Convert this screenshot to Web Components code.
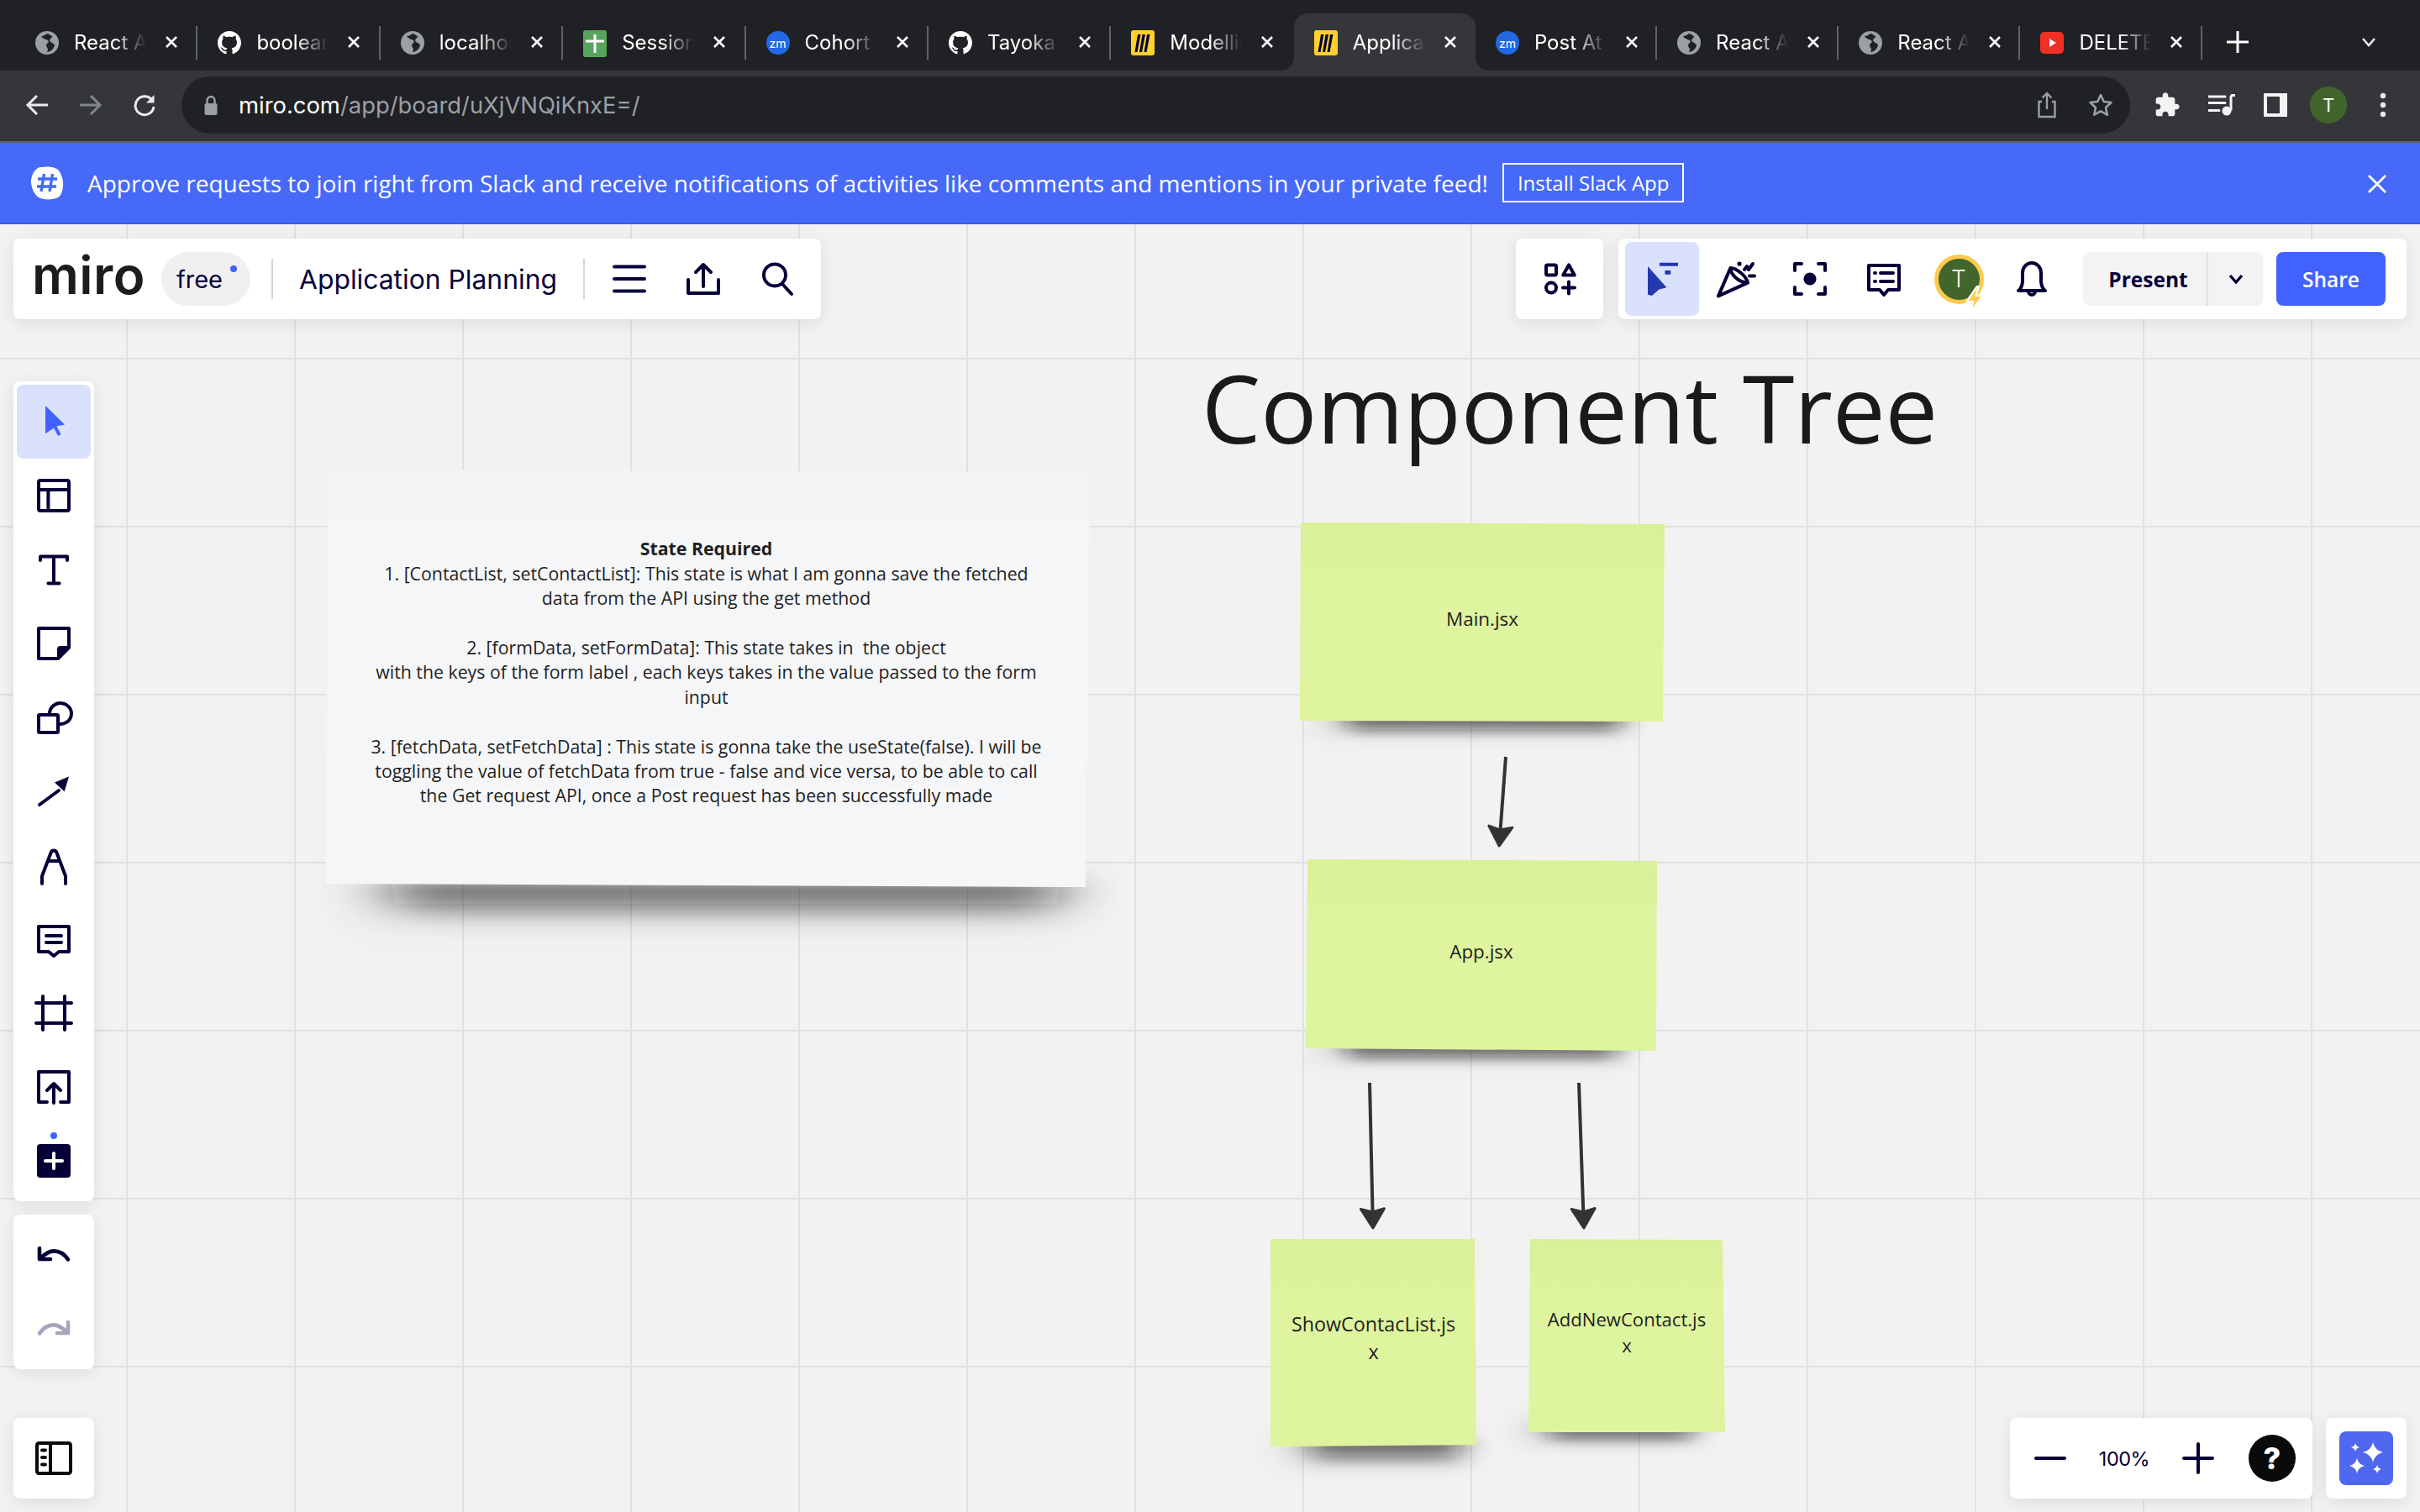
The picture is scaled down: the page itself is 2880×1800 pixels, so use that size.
<!DOCTYPE html>
<html lang="en">
<head>
<meta charset="utf-8">
<title>Application Planning</title>
<style>
  html, body { margin: 0; height: 100%; }
  body { width: 2880px; height: 1800px; overflow: hidden; display: flex; flex-direction: column; background: #f2f2f2; font-family: "Open Sans", sans-serif; }
  board-canvas { flex: 1; }
</style>
</head>
<body>
<chrome-tabs>
  <chrome-tab icon="globe">React App</chrome-tab>
  <chrome-tab icon="github">boolean</chrome-tab>
  <chrome-tab icon="globe">localhost</chrome-tab>
  <chrome-tab icon="sheets">Session</chrome-tab>
  <chrome-tab icon="zoom">Cohort</chrome-tab>
  <chrome-tab icon="github">Tayoka</chrome-tab>
  <chrome-tab icon="miro">Modelling</chrome-tab>
  <chrome-tab icon="miro" active>Application</chrome-tab>
  <chrome-tab icon="zoom">Post At</chrome-tab>
  <chrome-tab icon="globe">React App</chrome-tab>
  <chrome-tab icon="globe">React App</chrome-tab>
  <chrome-tab icon="youtube">DELETE</chrome-tab>
</chrome-tabs>
<chrome-toolbar></chrome-toolbar>
<slack-banner></slack-banner>
<board-canvas>
  <board-title>Component Tree</board-title>

  <board-note points="390,559 1297,563 1292,1056 388,1052" color="#f5f6f8" top="#f3f4f6" shadow="440 1275 30 12" size="21.3" shift="-4" lift="15">
    <div style="width:840px"><b>State Required</b><br>1. [ContactList, setContactList]: This state is what I am gonna save the fetched<br>data from the API using the get method<br><br>2. [formData, setFormData]: This state takes in &nbsp;the object<br>with the keys of the form label , each keys takes in the value passed to the form<br>input<br><br>3. [fetchData, setFetchData] : This state is gonna take the useState(false). I will be<br>toggling the value of fetchData from true - false and vice versa, to be able to call<br>the Get request API, once a Post request has been successfully made</div>
  </board-note>
  <board-note points="1548,622 1981,624 1979,859 1547,858" shadow="1590 1935 14 5" size="22.4" lift="8">Main.jsx</board-note>
  <board-note points="1556,1023 1972,1025 1971,1251 1554,1248" shadow="1590 1930 12 5" size="22.4" lift="8">App.jsx</board-note>
  <board-note points="1512,1475 1755,1475 1757,1720 1512,1722" shadow="1545 1745 18 6" size="23.3" lift="11">ShowContacList.js<br>x</board-note>
  <board-note points="1821,1475 2050,1476 2053,1705 1819,1705" shadow="1830 2020 12 5" size="22.1" lift="8">AddNewContact.js<br>x</board-note>

  <board-arrow from="1792,901" to="1784,1009"></board-arrow>
  <board-arrow from="1630,1289" to="1634,1464"></board-arrow>
  <board-arrow from="1879,1289" to="1885,1464"></board-arrow>

  <ui-panel style="position:absolute;left:16px;top:17px;height:96px;width:961px">
    <top-brand></top-brand>
  </ui-panel>
  <ui-panel style="position:absolute;left:1804px;top:17px;height:96px;width:104px;justify-content:center">
    <tool-btn icon="apps"></tool-btn>
  </ui-panel>
  <ui-panel style="position:absolute;left:1926px;top:17px;height:96px;width:938px;padding:4px 24px 4px 8px;box-sizing:border-box">
    <tool-btn icon="cursorList" active color="#2438b0"></tool-btn>
    <tool-btn icon="confetti"></tool-btn>
    <tool-btn icon="focus"></tool-btn>
    <tool-btn icon="commentList"></tool-btn>
    <user-avatar></user-avatar>
    <tool-btn icon="bell"></tool-btn>
    <present-share></present-share>
  </ui-panel>

  <ui-panel vertical style="position:absolute;left:16px;top:187px;width:96px;padding:4px;box-sizing:border-box">
    <tool-btn icon="pointer" active color="#4262ff"></tool-btn>
    <tool-btn icon="template"></tool-btn>
    <tool-btn icon="text"></tool-btn>
    <tool-btn icon="sticky"></tool-btn>
    <tool-btn icon="shapes"></tool-btn>
    <tool-btn icon="arrow"></tool-btn>
    <tool-btn icon="pen"></tool-btn>
    <tool-btn icon="comment"></tool-btn>
    <tool-btn icon="frame"></tool-btn>
    <tool-btn icon="upload"></tool-btn>
    <tool-btn icon="more"></tool-btn>
  </ui-panel>
  <ui-panel vertical style="position:absolute;left:16px;top:1179px;width:96px;padding:4px;box-sizing:border-box">
    <tool-btn icon="undo"></tool-btn>
    <tool-btn icon="redo" color="#a5a6bd"></tool-btn>
  </ui-panel>
  <ui-panel style="position:absolute;left:16px;top:1421px;width:96px;padding:4px;box-sizing:border-box">
    <tool-btn icon="sidebar" color="#0a0a0a"></tool-btn>
  </ui-panel>

  <ui-panel style="position:absolute;left:2392px;top:1421px;width:360px;padding:4px;box-sizing:border-box">
    <tool-btn icon="minus"></tool-btn>
    <zoom-label>100%</zoom-label>
    <tool-btn icon="plus"></tool-btn>
    <help-button></help-button>
  </ui-panel>
  <ui-panel style="position:absolute;left:2768px;top:1421px;width:96px;height:96px;justify-content:center">
    <ai-button></ai-button>
  </ui-panel>
</board-canvas>

<script>
// svg bodies, everything on a 24 unit grid unless the tag says otherwise
const ICONS = {
  apps: '<rect x="4" y="3.7" width="6" height="6" rx=".8"/><path d="M17.5 3.7l3.4 6h-6.8z"/><circle cx="7" cy="17.3" r="3"/><path d="M17.5 13.8v7M14 17.3h7"/>',
  cursorList: '<path fill="currentColor" stroke="none" d="M3.5 4.5l11.2 12.6-4.5 1.200L6 22l-2.500-.6z"/><path fill="currentColor" stroke="none" d="M10.500 2.400h11v2h-11zM13.700 7h3.400v2.400h-3.400z"/>',
  confetti: '<path d="M1.500 22.200L8.700 5.500c3.300 0 9.300 4.500 10.300 8.800zM8.700 5.500c0 3.500 4.300 8.500 10.300 8.800"/><circle cx="14" cy="3" r="1.300" fill="currentColor" stroke="none"/><path d="M17 6.500l1.500-2 1 2 2.500-3.500M20 10.200h3"/>',
  focus: '<path d="M7 3H3v4M17 3h4v4M21 17v4h-4M7 21H3v-4"/><circle cx="12" cy="12" r="3.800" fill="currentColor" stroke="none"/>',
  commentList: '<path d="M3 4h18v14.500h-6.500L12 21.500l-2.500-3H3z"/><path d="M6.500 8.500h.5M10 8.500h7.500M6.500 13.500h.5M10 13.500h7.500"/>',
  bell: '<path d="M4 19c2-1.500 2.500-3 2.500-6V8.500c0-3.500 2.500-6 5.500-6s5.500 2.500 5.500 6V13c0 3 .5 4.500 2.500 6z"/><path d="M10 19.500a2 2 0 004 0"/>',
  menu: '<path d="M3 4.700h18M3 12h18M3 19.300h18"/>',
  exportUp: '<path d="M3 12.500V20.500h18v-8M12 16.500V3.500M7.500 8L12 3.500 16.500 8"/>',
  search: '<circle cx="10.500" cy="9.700" r="6.500"/><path d="M15 15l5.500 6"/>',
  pointer: '<path fill="currentColor" stroke="none" d="M7 2.500l11.500 11.200-5 1.100-6.500 4.300z"/><path d="M12.500 14.500l2.500 4.800"/>',
  template: '<rect x="3" y="3" width="18" height="18" rx="1"/><path d="M3 8.500h18M8.700 8.500V21"/>',
  text: '<path d="M4 6.500V4.200h16v2.300M12 4.200V20M8.700 20.200h6.600"/>',
  sticky: '<path d="M3 3h18v11.500L14.500 21H3z" stroke-linejoin="round"/><path fill="currentColor" stroke="none" d="M14 21v-5.500a2 2 0 012-2h5.500v1.500l-6 5.500z"/>',
  shapes: '<rect x="3" y="10.500" width="11.500" height="10.500" rx=".6"/><path d="M9.500 9.500A6.500 6.200 0 1 1 14.500 15.800"/>',
  arrow: '<path d="M3.500 20L15 11.500"/><path fill="currentColor" stroke="none" d="M21 3.200l-8.500 3.500 5.800 5.400z"/>',
  pen: '<path d="M5 23v-4.500l5.300-14a1.800 1.800 0 013.400 0l5.300 14V23M8.500 9.500h7"/>',
  comment: '<path d="M3 4.500h18v15h-6l-3 2.500-3-2.500H3z"/><path d="M7.500 10h9M7.500 14h9"/>',
  frame: '<path d="M5.500 2v20M18.500 2v20M1.500 6h21M1.500 18h21"/>',
  upload: '<path d="M8 21H3V3h18v18h-5M12 21.500V10M8 14l4-4 4 4"/>',
  more: '<rect x="2" y="2" width="20" height="20" rx="2" fill="currentColor" stroke="none"/><path d="M7 12h10M12 7.500v9" stroke="#fff"/>',
  undo: '<path d="M3.500 8v6.500H10" stroke-width="2.300"/><path d="M3.800 14.300C7 11 9.500 9.700 12 9.700c3.500 0 6.500 2 8.500 5" stroke-width="2.300"/>',
  redo: '<path d="M20.500 8v6.500H14" stroke-width="2.300"/><path d="M20.200 14.300C17 11 14.500 9.700 12 9.700c-3.500 0-6.500 2-8.500 5" stroke-width="2.300"/>',
  sidebar: '<rect x="2" y="3" width="20" height="18" rx="1.200"/><path d="M10 3v18M5 7.200h2M5 11.500h2M5 15.800h2"/>',
  minus: '<path d="M3.500 12h17"/>',
  plus: '<path d="M3.500 12h17M12 3.500v17"/>'
};

const FAVICONS = {
  globe: '<svg viewBox="0 0 28 28"><circle cx="14" cy="14" r="14" fill="#9aa0a6"/><path fill="#202124" d="M14 3c-2 1.500-4 3-7 3 1 2.500 4 3.500 7 4.500 2.500 1 2 3 .5 4-2 1-1.500 3.500-.5 5 1.500 1.500 1 3.500 0 5.500 4-.5 8-3.500 9-8-1-3-4-3-5.500-5-1-1.500 1-4 3-5-2-2-4-3.500-6.500-4z"/></svg>',
  github: '<svg viewBox="0 0 16 16"><path fill="#fff" d="M8 0C3.580 0 0 3.580 0 8c0 3.540 2.290 6.530 5.470 7.590.4.070.55-.17.55-.38 0-.19-.01-.82-.01-1.490-2.010.37-2.530-.49-2.690-.94-.09-.23-.48-.94-.82-1.130-.28-.15-.68-.52-.01-.53.63-.01 1.080.58 1.230.82.72 1.210 1.870.87 2.330.66.070-.52.28-.87.51-1.070-1.780-.2-3.640-.89-3.640-3.950 0-.87.31-1.590.82-2.150-.08-.2-.36-1.020.08-2.120 0 0 .67-.21 2.200.82.64-.18 1.320-.27 2-.27.68 0 1.360.09 2 .27 1.530-1.040 2.200-.82 2.200-.82.44 1.100.16 1.920.08 2.120.51.56.82 1.270.82 2.150 0 3.070-1.870 3.750-3.650 3.950.29.25.54.73.54 1.480 0 1.070-.01 1.930-.01 2.200 0 .21.15.46.55.38A8.013 8.013 0 0016 8c0-4.420-3.580-8-8-8z"/></svg>',
  sheets: '<svg viewBox="0 0 28 28"><rect width="28" height="32" y="-1" rx="3" fill="#57a55c"/><path d="M14 4v22M3 12h22" stroke="#fff" stroke-width="3"/></svg>',
  miro: '<svg viewBox="0 0 28 28"><rect y="-1" width="28" height="30" rx="3" fill="#ffd02f"/><path fill="#050038" d="M11.500 4h3.500L11 25H8zM17 4h3.500L16.500 25h-3zM6 4h3.500L5.500 25h-3z" transform="translate(2)"/></svg>',
  youtube: '<svg viewBox="0 0 28 28"><rect y="1" width="28" height="26" rx="5" fill="#ee3124"/><path fill="#fff" d="M11 9l8 5-8 5z"/></svg>'
};

class ChromeTabs extends HTMLElement {
  constructor() {
    super();
    this.attachShadow({ mode: 'open' });
  }

  connectedCallback() {
    this.shadowRoot.innerHTML = `
      <style>
        :host { display: flex; height: 84px; box-sizing: border-box; padding: 16px 0 0 18px; background: #202124; position: relative; }
        .plus { position: absolute; left: 2650px; top: 37px; width: 26px; height: 26px; }
        .more { position: absolute; left: 2810px; top: 44px; width: 18px; height: 12px; }
      </style>
      <slot></slot>
      <svg class="plus" viewBox="0 0 26 26"><path d="M13 0v26M0 13h26" stroke="#fff" stroke-width="3"/></svg>
      <svg class="more" viewBox="0 0 18 12"><path d="M2 2l7 8 7-8" fill="none" stroke="#e8eaed" stroke-width="2.500"/></svg>
    `;
  }
}

class ChromeTab extends HTMLElement {
  constructor() {
    super();
    this.attachShadow({ mode: 'open' });
  }

  connectedCallback() {
    const name = this.getAttribute('icon');
    let fav = FAVICONS[name] || '';
    if (name === 'zoom') {
      fav = '<span class="zm">zm</span>';
    }
    // tabs after the active one sit a little closer together
    const index = [...this.parentNode.children].indexOf(this);
    this.style.width = (index < 7 ? 217.4 : 216.2) + 'px';
    this.shadowRoot.innerHTML = `
      <style>
        :host { display: flex; align-items: center; height: 68px; flex: none; box-sizing: border-box; padding-left: 24px; position: relative; color: #fff; font: 24px Inter, sans-serif; }
        :host([active]) { background: #35363a; border-radius: 16px 16px 0 0; }
        :host([active])::before, :host([active])::after { content: ''; position: absolute; bottom: 0; width: 16px; height: 16px; }
        :host([active])::before { left: -16px; background: radial-gradient(circle at 0 0, transparent 16px, #35363a 16.500px); }
        :host([active])::after { right: -16px; background: radial-gradient(circle at 100% 0, transparent 16px, #35363a 16.500px); }
        .fav { width: 28px; height: 28px; flex: none; display: block; margin-top: 2px; }
        .fav svg { display: block; width: 28px; height: 28px; overflow: visible; }
        .zm { display: flex; align-items: center; justify-content: center; width: 28px; height: 28px; border-radius: 50%; background: #2368e4; font: 14px Inter, sans-serif; color: #fff; }
        .title { width: 86px; margin-left: 18px; white-space: nowrap; overflow: hidden; -webkit-mask-image: linear-gradient(90deg, #000 55%, transparent 100%); mask-image: linear-gradient(90deg, #000 55%, transparent 100%); }
        .close { position: absolute; left: 178px; top: 26px; width: 16px; height: 16px; }
        .sep { position: absolute; right: 0; top: 15px; width: 2px; height: 40px; background: #5f6368; }
        :host([active]) .sep { display: none; }
      </style>
      <span class="fav">${fav}</span>
      <span class="title"><slot></slot></span>
      <svg class="close" viewBox="0 0 16 16"><path d="M2 2l12 12M14 2L2 14" stroke="#fff" stroke-width="2.600"/></svg>
      <span class="sep"></span>
    `;
    // the separator just before the active tab goes away too
    const next = this.nextElementSibling;
    if (next && next.hasAttribute('active')) {
      this.shadowRoot.querySelector('.sep').style.display = 'none';
    }
  }
}

class ChromeToolbar extends HTMLElement {
  constructor() {
    super();
    this.attachShadow({ mode: 'open' });
  }

  connectedCallback() {
    this.shadowRoot.innerHTML = `
      <style>
        :host { display: flex; align-items: center; height: 86px; box-sizing: border-box; padding: 0 0 2px 0; background: #35363a; border-bottom: 2px solid #5f6368; position: relative; }
        .nav { width: 64px; display: flex; justify-content: center; flex: none; }
        .nav svg { width: 28px; height: 28px; }
        .start { width: 12px; flex: none; }
        .omni { margin-left: 12px; width: 2319px; height: 68px; flex: none; box-sizing: border-box; border-radius: 34px; background: #202124; display: flex; align-items: center; padding-left: 26px; font: 27.400px Inter, sans-serif; color: #9aa0a6; position: relative; }
        .omni b { font-weight: 400; color: #fff; }
        .lock { width: 18px; height: 24px; margin-right: 24px; }
        .r { position: absolute; top: 41px; transform: translate(-50%, -50%); display: block; }
        .avatar { position: absolute; left: 2749px; top: 19px; width: 44px; height: 44px; border-radius: 50%; background: #41652a; color: #fff; font: 22px Inter, sans-serif; display: flex; align-items: center; justify-content: center; }
      </style>
      <span class="start"></span>
      <span class="nav"><svg viewBox="0 0 28 28"><path d="M27 14H3M14 3L3 14l11 11" fill="none" stroke="#e8eaed" stroke-width="3"/></svg></span>
      <span class="nav"><svg viewBox="0 0 28 28"><path d="M1 14h24M14 3l11 11-11 11" fill="none" stroke="#80868b" stroke-width="3"/></svg></span>
      <span class="nav"><svg viewBox="0 0 28 28"><path d="M23.500 9A11 11 0 1 0 25 16" fill="none" stroke="#e8eaed" stroke-width="3"/><path d="M25.500 2v9.500H16z" fill="#e8eaed"/></svg></span>
      <div class="omni">
        <svg class="lock" viewBox="0 0 18 24"><path d="M4.500 11V6.500a4.500 4.500 0 019 0V11" fill="none" stroke="#9aa0a6" stroke-width="2.400"/><rect x="1.500" y="10" width="15" height="14" rx="2" fill="#9aa0a6"/></svg>
        <span><b>miro.com</b>/app/board/uXjVNQiKnxE=/</span>
      </div>
      <svg class="r" style="left:2436px;width:26px;height:32px" viewBox="0 0 26 32"><path d="M7 12H3.500v18h19V12H19M13 21V2M7.500 7.500L13 2l5.500 5.500" fill="none" stroke="#9aa0a6" stroke-width="2.400"/></svg>
      <svg class="r" style="left:2500px;width:30px;height:30px" viewBox="0 0 30 30"><path d="M15 3l3.700 8 8.800 1-6.500 6 1.800 8.700L15 22.300l-7.800 4.400L9 18l-6.500-6 8.800-1z" fill="none" stroke="#9aa0a6" stroke-width="2.600" stroke-linejoin="round"/></svg>
      <svg class="r" style="left:2579px;width:32px;height:32px" viewBox="0 0 24 24"><path fill="#f1f3f4" d="M20.500 11H19V7c0-1.100-.9-2-2-2h-4V3.500C13 2.120 11.880 1 10.500 1S8 2.120 8 3.500V5H4c-1.100 0-1.990.9-1.990 2v3.800H3.500c1.490 0 2.700 1.210 2.700 2.700s-1.210 2.700-2.700 2.700H2V20c0 1.100.9 2 2 2h3.800v-1.500c0-1.490 1.210-2.700 2.700-2.700 1.490 0 2.700 1.210 2.700 2.700V22H17c1.100 0 2-.9 2-2v-4h1.500c1.380 0 2.500-1.120 2.500-2.500S21.880 11 20.500 11z"/></svg>
      <svg class="r" style="left:2644px;width:32px;height:28px" viewBox="0 0 32 28"><path d="M0 4h20M0 11.500h20M0 20.500h13" stroke="#f1f3f4" stroke-width="3" stroke-linecap="round"/><path d="M27 2.500v18" stroke="#f1f3f4" stroke-width="3"/><path d="M27 1h5v3h-5z" fill="#f1f3f4"/><circle cx="22" cy="21" r="5.500" fill="#f1f3f4"/></svg>
      <svg class="r" style="left:2708px;width:28px;height:28px" viewBox="0 0 28 28"><path fill="#f1f3f4" fill-rule="evenodd" d="M0 0h28v28H0zM4 4v20h15V4z"/></svg>
      <span class="avatar">T</span>
      <svg class="r" style="left:2836px;width:8px;height:30px" viewBox="0 0 8 30"><circle cx="4" cy="4" r="3.200" fill="#e8eaed"/><circle cx="4" cy="15" r="3.200" fill="#e8eaed"/><circle cx="4" cy="26" r="3.200" fill="#e8eaed"/></svg>
    `;
  }
}

class SlackBanner extends HTMLElement {
  constructor() {
    super();
    this.attachShadow({ mode: 'open' });
  }

  connectedCallback() {
    this.shadowRoot.innerHTML = `
      <style>
        :host { display: flex; align-items: center; height: 97px; box-sizing: border-box; padding-left: 36px; background: #4769f8; border-bottom: 2px solid #3f5fe0; color: #fff; font: 28px "Open Sans", sans-serif; position: relative; }
        .logo { width: 40px; height: 40px; margin-right: 28px; flex: none; }
        .btn { margin-left: 17px; height: 47px; box-sizing: border-box; padding: 0 16px; border: 2px solid #fff; display: flex; align-items: center; font-size: 24px; }
        .x { position: absolute; left: 2817px; top: 37px; width: 24px; height: 24px; }
      </style>
      <svg class="logo" viewBox="0 0 40 40"><path d="M12 1c7-1 17-1 21 3s7 14 6 20-2 12-8 14-16 2-21-1-8-10-9-17S5 2 12 1z" fill="#fff"/><path d="M16.500 9L13 30M26.500 9L23 30M9 15h23M8 24h23" stroke="#4769f8" stroke-width="3.400" fill="none"/></svg>
      <span>Approve requests to join right from Slack and receive notifications of activities like comments and mentions in your private feed!</span>
      <span class="btn">Install Slack App</span>
      <svg class="x" viewBox="0 0 24 24"><path d="M2 2l20 20M22 2L2 22" stroke="#fff" stroke-width="2.800"/></svg>
    `;
  }
}

class BoardCanvas extends HTMLElement {
  constructor() {
    super();
    this.attachShadow({ mode: 'open' });
  }

  connectedCallback() {
    this.shadowRoot.innerHTML = `
      <style>
        :host {
          display: block; position: relative; overflow: hidden; background-color: #f2f2f2;
          background-image: linear-gradient(90deg, #e1e1e1 2px, transparent 2px), linear-gradient(#e1e1e1 2px, transparent 2px);
          background-size: 200px 200px;
          background-position: 150px 159px;
        }
      </style>
      <slot></slot>
    `;
  }
}

// page coordinates come in, the canvas starts below the browser chrome
const BOARD_TOP = 267;

class BoardNote extends HTMLElement {
  constructor() {
    super();
    this.attachShadow({ mode: 'open' });
  }

  connectedCallback() {
    const pts = this.getAttribute('points').split(' ').map(p => p.split(',').map(Number));
    const xs = pts.map(p => p[0]);
    const ys = pts.map(p => p[1]);
    const left = Math.min(...xs);
    const top = Math.min(...ys);
    const w = Math.max(...xs) - left;
    const h = Math.max(...ys) - top;
    const poly = pts.map(p => `${p[0] - left}px ${p[1] - top}px`).join(',');
    const color = this.getAttribute('color') || '#def49e';
    const topColor = this.getAttribute('top') || '#daf099';
    const lift = this.getAttribute('lift') || 6;
    const shift = this.getAttribute('shift') || 0;
    const [sx0, sx1, depth, blur] = this.getAttribute('shadow').split(' ').map(Number);
    const id = 'b' + Math.round(left);

    this.style.left = left + 'px';
    this.style.top = (top - BOARD_TOP) + 'px';
    this.style.width = w + 'px';
    this.style.height = h + 'px';

    const x0 = sx0 - left;
    const x1 = sx1 - left;
    const yb = h;
    this.shadowRoot.innerHTML = `
      <style>
        :host { display: block; position: absolute; }
        svg { position: absolute; left: 0; top: 0; width: 100%; height: 100%; overflow: visible; }
        .face { position: absolute; inset: 0; clip-path: polygon(${poly}); background: linear-gradient(${topColor} 0, ${topColor} 30px, ${color} 70px); display: flex; align-items: center; justify-content: center; text-align: center; box-sizing: border-box; padding: 0 ${shift < 0 ? -shift : 0}px ${lift}px 0; color: #1f1f1f; font: ${this.getAttribute('size')}px/1.41 "Open Sans", sans-serif; }
        .face.doc { line-height: 29.400px; }
      </style>
      <svg>
        <defs>
          <filter id="${id}a" x="-20%" y="-100%" width="140%" height="300%"><feGaussianBlur stdDeviation="${blur * 3} ${blur * .9}"/></filter>
          <filter id="${id}b" x="-20%" y="-100%" width="140%" height="400%"><feGaussianBlur stdDeviation="${blur * 3}"/></filter>
          <linearGradient id="${id}g" x1="0" y1="0" x2="0" y2="1"><stop offset=".2" stop-color="#111" stop-opacity=".62"/><stop offset="1" stop-color="#111" stop-opacity="0"/></linearGradient>
        </defs>
        <path d="M${x0 - 30} ${yb - 16}H${x1 + 10}V${yb + depth}H${x0 - 30}z" fill="#000" opacity=".08" filter="url(#${id}b)"/>
        <path d="M${x0 + blur * 2} ${yb - 8}H${x1 - blur}L${x1 - blur * 2} ${yb + depth * 1.5}H${x0 + blur * 3}z" fill="url(#${id}g)" filter="url(#${id}a)"/>
      </svg>
      <div class="face ${w > 600 ? 'doc' : ''}"><div><slot></slot></div></div>
    `;
  }
}

class BoardArrow extends HTMLElement {
  constructor() {
    super();
    this.attachShadow({ mode: 'open' });
  }

  connectedCallback() {
    const [x1, y1] = this.getAttribute('from').split(',').map(Number);
    const [x2, y2] = this.getAttribute('to').split(',').map(Number);
    const deg = Math.atan2(y2 - y1, x2 - x1) * 180 / Math.PI;
    const len = Math.hypot(x2 - x1, y2 - y1);
    this.style.left = x1 + 'px';
    this.style.top = (y1 - BOARD_TOP) + 'px';
    this.shadowRoot.innerHTML = `
      <style>
        :host { display: block; position: absolute; width: 1px; height: 1px; }
        svg { position: absolute; left: 0; top: 0; overflow: visible; width: 1px; height: 1px; }
      </style>
      <svg><g transform="rotate(${deg})" fill="#333" stroke="#333">
        <path d="M0 0H${len - 16}" stroke-width="4" fill="none"/>
        <path d="M${len - 2} 0L${len - 25} -14L${len - 21} 0L${len - 25} 14z" stroke-width="3" stroke-linejoin="round"/>
      </g></svg>
    `;
  }
}

class BoardTitle extends HTMLElement {
  constructor() {
    super();
    this.attachShadow({ mode: 'open' });
    this.shadowRoot.innerHTML = `
      <style>
        :host { display: block; position: absolute; left: 1430px; top: 140px; white-space: nowrap; color: #1a1a1a; font: 111.500px/1.4 "Open Sans", sans-serif; }
      </style>
      <slot></slot>
    `;
  }
}

class UiPanel extends HTMLElement {
  constructor() {
    super();
    this.attachShadow({ mode: 'open' });
    this.shadowRoot.innerHTML = `
      <style>
        :host { display: flex; align-items: center; background: #fff; border-radius: 8px; box-shadow: 0 4px 20px rgba(5, 0, 56, .09); }
        :host([vertical]) { flex-direction: column; }
      </style>
      <slot></slot>
    `;
  }
}

class ToolBtn extends HTMLElement {
  constructor() {
    super();
    this.attachShadow({ mode: 'open' });
  }

  connectedCallback() {
    const color = this.getAttribute('color') || '#050038';
    const body = ICONS[this.getAttribute('icon')];
    this.shadowRoot.innerHTML = `
      <style>
        :host { display: flex; align-items: center; justify-content: center; width: 88px; height: 88px; flex: none; border-radius: 8px; color: ${color}; }
        :host([active]) { background: #dae1fd; }
        svg { width: 48px; height: 48px; fill: none; stroke: currentColor; stroke-width: 2; stroke-linecap: round; stroke-linejoin: round; overflow: visible; }
      </style>
      <svg viewBox="0 0 24 24">${body}</svg>
    `;
    if (this.getAttribute('icon') === 'more') {
      this.shadowRoot.querySelector('svg').insertAdjacentHTML('beforeend', '<circle cx="12" cy="-3" r="2" fill="#4262ff" stroke="none"/>');
    }
  }
}

class TopBrand extends HTMLElement {
  constructor() {
    super();
    this.attachShadow({ mode: 'open' });
    this.shadowRoot.innerHTML = `
      <style>
        :host { display: flex; align-items: center; width: 100%; height: 100%; color: #050038; font-family: Inter, sans-serif; }
        .logo { margin-left: 22px; width: 154px; font: 600 62px/96px Inter, sans-serif; letter-spacing: .5px; color: #1c1c1e; margin-top: -8px; }
        .pill { position: relative; width: 106px; height: 64px; box-sizing: border-box; padding-left: 18px; border-radius: 32px; background: #f0f0f3; display: flex; align-items: center; font: 400 29px Inter, sans-serif; }
        .pill i { position: absolute; left: 82px; top: 16px; width: 8px; height: 8px; border-radius: 50%; background: #4262ff; }
        .sep { width: 2px; height: 48px; background: #d6d6da; flex: none; }
        .name { margin: 0 33px 0 31px; width: 305px; white-space: nowrap; font: 400 31.800px Inter, sans-serif; }
      </style>
      <span class="logo">miro</span>
      <span class="pill">free<i></i></span>
      <span class="sep" style="margin-left:25px"></span>
      <span class="name">Application Planning</span>
      <span class="sep"></span>
      <tool-btn icon="menu" style="margin-left:9px"></tool-btn>
      <tool-btn icon="exportUp"></tool-btn>
      <tool-btn icon="search"></tool-btn>
    `;
  }
}

class UserAvatar extends HTMLElement {
  constructor() {
    super();
    this.attachShadow({ mode: 'open' });
    this.shadowRoot.innerHTML = `
      <style>
        :host { display: flex; align-items: center; justify-content: center; width: 88px; height: 88px; flex: none; position: relative; left: 1px; }
        .ring { width: 59px; height: 59px; box-sizing: border-box; border: 5px solid #ffc94d; border-radius: 50%; background: #41652a; color: #fff; display: flex; align-items: center; justify-content: center; font: 300 28px Inter, sans-serif; }
        svg { position: absolute; left: 50px; top: 52px; width: 26px; height: 32px; }
      </style>
      <span class="ring">T</span>
      <svg viewBox="0 0 24 34"><path d="M15 1L2 20h8l-3 13L22 13h-8l3-12z" fill="#ffc94d" stroke="#fff" stroke-width="2.400"/></svg>
    `;
  }
}

class PresentShare extends HTMLElement {
  constructor() {
    super();
    this.attachShadow({ mode: 'open' });
    this.shadowRoot.innerHTML = `
      <style>
        :host { display: flex; align-items: center; margin-left: 17px; gap: 16px; font: 700 24.500px "Open Sans", sans-serif; }
        .present { display: flex; width: 214px; height: 64px; background: #f3f3f5; border-radius: 8px; color: #050038; }
        .label { width: 149px; box-sizing: border-box; padding-left: 8px; display: flex; align-items: center; justify-content: center; border-right: 2px solid #e2e2e6; }
        .caret { flex: 1; display: flex; align-items: center; justify-content: center; }
        .caret svg { width: 18px; height: 12px; }
        .share { width: 130px; height: 64px; border-radius: 8px; background: #4262ff; color: #fff; display: flex; align-items: center; justify-content: center; font-weight: 600; }
      </style>
      <div class="present">
        <span class="label">Present</span>
        <span class="caret"><svg viewBox="0 0 18 12"><path d="M2 2l7 8 7-8" fill="none" stroke="#050038" stroke-width="3.400"/></svg></span>
      </div>
      <span class="share">Share</span>
    `;
  }
}

class ZoomLabel extends HTMLElement {
  constructor() {
    super();
    this.attachShadow({ mode: 'open' });
    this.shadowRoot.innerHTML = `
      <style>
        :host { display: flex; align-items: center; justify-content: center; width: 88px; height: 88px; flex: none; color: #050038; font: 400 23.500px Inter, sans-serif; letter-spacing: -.5px; }
      </style>
      <slot></slot>
    `;
  }
}

class HelpButton extends HTMLElement {
  constructor() {
    super();
    this.attachShadow({ mode: 'open' });
    this.shadowRoot.innerHTML = `
      <style>
        :host { display: flex; align-items: center; justify-content: center; width: 88px; height: 88px; flex: none; }
        span { width: 56px; height: 56px; border-radius: 50%; background: #0a0a0a; color: #fff; display: flex; align-items: center; justify-content: center; font: 800 36px Inter, sans-serif; }
      </style>
      <span>?</span>
    `;
  }
}

class AiButton extends HTMLElement {
  constructor() {
    super();
    this.attachShadow({ mode: 'open' });
    const star = (x, y, r) => `<path fill="#fff" d="M${x} ${y - r}Q${x + r * .18} ${y - r * .18} ${x + r} ${y}Q${x + r * .18} ${y + r * .18} ${x} ${y + r}Q${x - r * .18} ${y + r * .18} ${x - r} ${y}Q${x - r * .18} ${y - r * .18} ${x} ${y - r}z"/>`;
    this.shadowRoot.innerHTML = `
      <style>
        :host { display: flex; width: 64px; height: 64px; border-radius: 8px; background: #4f68ef; }
        svg { width: 64px; height: 64px; }
      </style>
      <svg viewBox="0 0 64 64">${star(40, 25, 12)}${star(21, 41, 9)}${star(19, 19, 5)}${star(45, 45, 5)}</svg>
    `;
  }
}

customElements.define('chrome-tabs', ChromeTabs);
customElements.define('chrome-tab', ChromeTab);
customElements.define('chrome-toolbar', ChromeToolbar);
customElements.define('slack-banner', SlackBanner);
customElements.define('board-canvas', BoardCanvas);
customElements.define('board-note', BoardNote);
customElements.define('board-arrow', BoardArrow);
customElements.define('board-title', BoardTitle);
customElements.define('ui-panel', UiPanel);
customElements.define('tool-btn', ToolBtn);
customElements.define('top-brand', TopBrand);
customElements.define('user-avatar', UserAvatar);
customElements.define('present-share', PresentShare);
customElements.define('zoom-label', ZoomLabel);
customElements.define('help-button', HelpButton);
customElements.define('ai-button', AiButton);
</script>
</body>
</html>
